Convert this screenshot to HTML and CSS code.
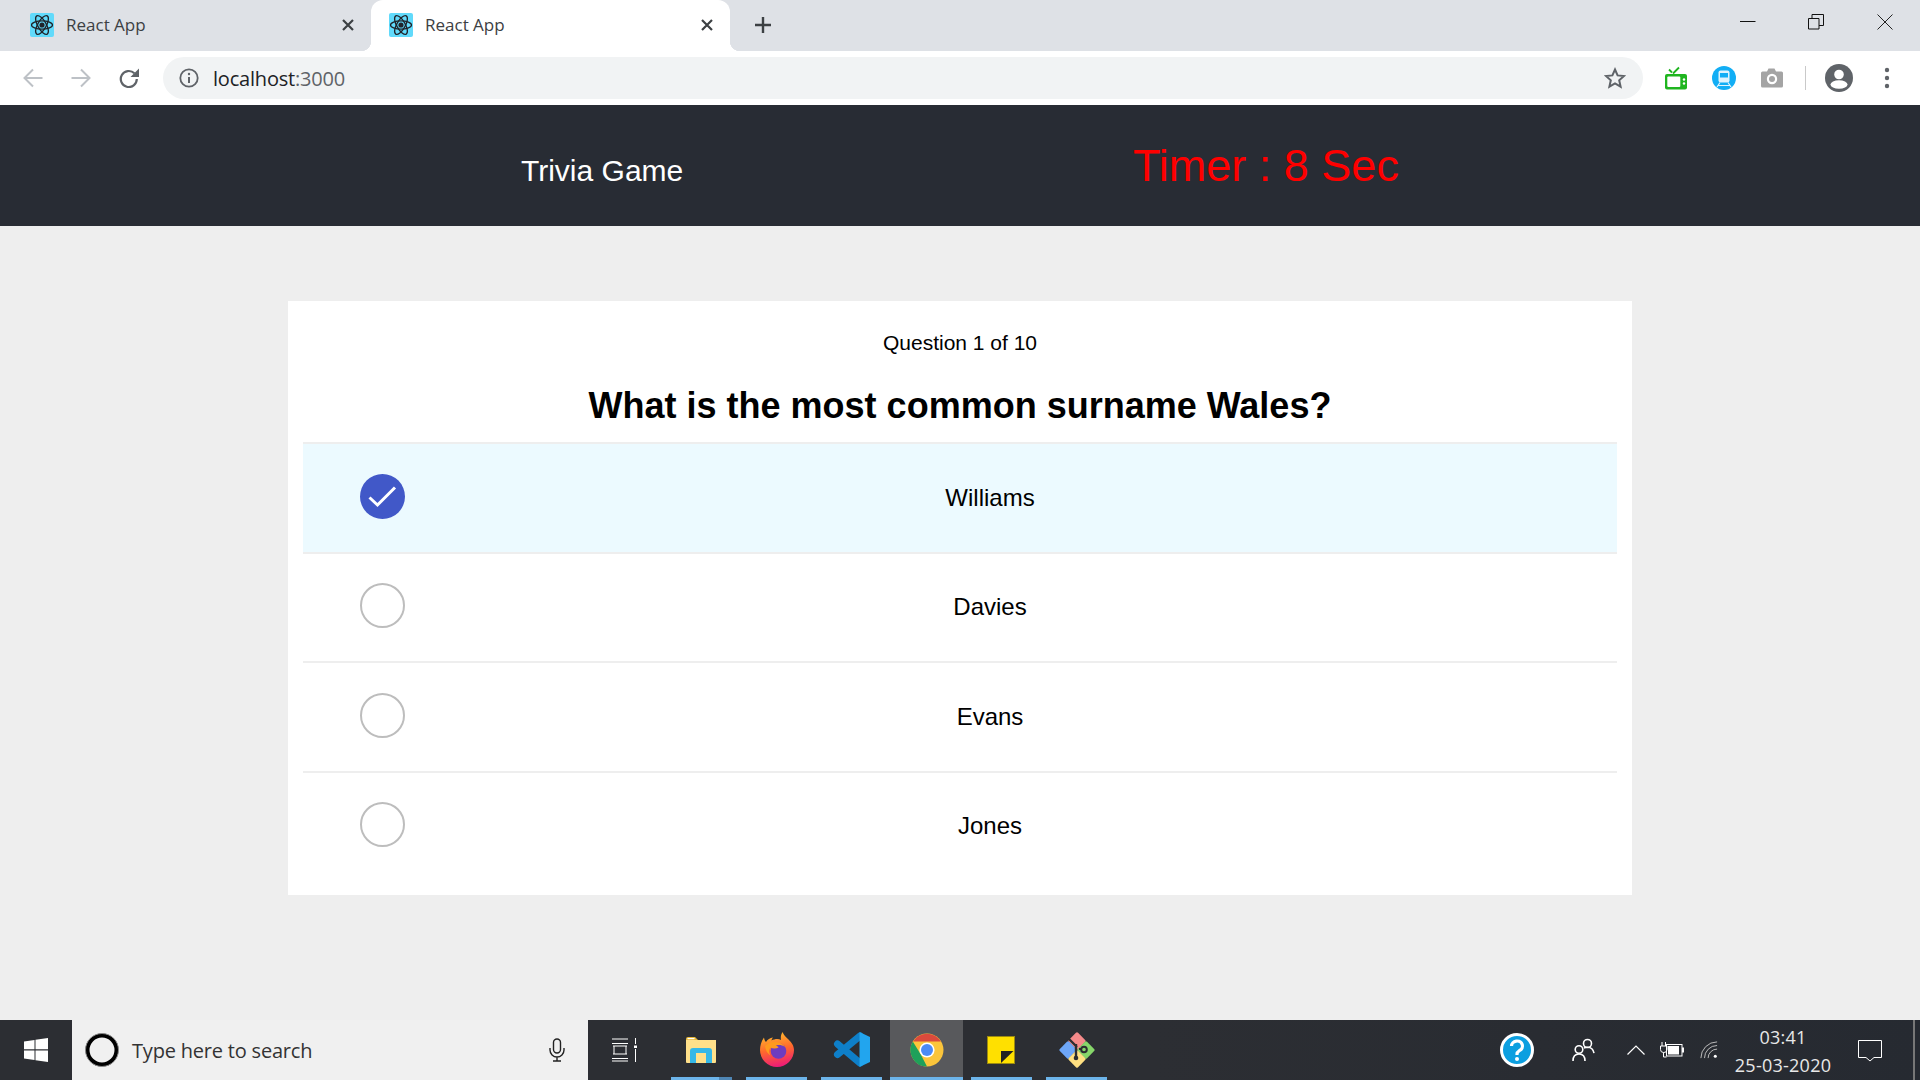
FILE: index.html
```html
<!DOCTYPE html>
<html lang="en">
<head>
<meta charset="utf-8">
<title>React App</title>
<link rel="stylesheet" href="styles.css">
</head>
<body>
<svg class="defs" width="0" height="0" aria-hidden="true">
  <symbol id="react" viewBox="0 0 24 24">
    <rect width="24" height="24" rx="2" fill="#61dafb"/>
    <g fill="none" stroke="#20232a" stroke-width="1.3">
      <ellipse cx="12" cy="12" rx="10.5" ry="4.2"/>
      <ellipse cx="12" cy="12" rx="10.5" ry="4.2" transform="rotate(60 12 12)"/>
      <ellipse cx="12" cy="12" rx="10.5" ry="4.2" transform="rotate(120 12 12)"/>
    </g>
    <circle cx="12" cy="12" r="2.6" fill="#20232a"/>
  </symbol>
  <symbol id="x" viewBox="0 0 14 14">
    <path d="M2 2l10 10M12 2L2 12" stroke="#3c4043" stroke-width="2.2" fill="none"/>
  </symbol>
</svg>

<div class="tabstrip">
  <div class="tab">
    <svg class="favicon"><use href="#react"/></svg>
    <span class="tab-title">React App</span>
    <svg class="tab-close"><use href="#x"/></svg>
  </div>
  <div class="tab tab-active">
    <svg class="favicon"><use href="#react"/></svg>
    <span class="tab-title">React App</span>
    <svg class="tab-close"><use href="#x"/></svg>
  </div>
  <svg class="newtab" viewBox="0 0 18 18"><path d="M9 1v16M1 9h16" stroke="#3c4043" stroke-width="2.4"/></svg>
  <div class="winctrls">
    <svg class="win win-min" viewBox="0 0 16 16"><path d="M0 7.5h15.5" stroke="#111" stroke-width="1"/></svg>
    <svg class="win win-max" viewBox="0 0 16 16"><path d="M.5 4.5h10.5v10.500H.5zM4 4.500V.5h11.500v11H11" fill="none" stroke="#111" stroke-width="1"/></svg>
    <svg class="win win-close" viewBox="0 0 16 16"><path d="M.5.5l15 15M15.500.5l-15 15" stroke="#222" stroke-width="1"/></svg>
  </div>
</div>

<div class="toolbar">
  <svg class="nav nav-back" viewBox="0 0 20 20"><path d="M19.500 10H2M10 1.500L1.500 10l8.500 8.500" fill="none" stroke="#bdc1c6" stroke-width="2"/></svg>
  <svg class="nav nav-fwd" viewBox="0 0 20 20"><path d="M.5 10H18M10 1.500l8.500 8.500-8.500 8.500" fill="none" stroke="#bdc1c6" stroke-width="2"/></svg>
  <svg class="nav nav-reload" viewBox="0 0 20 20"><path d="M17.800 11a8 8 0 1 1-2.400-5.700" fill="none" stroke="#5f6368" stroke-width="2.200"/><path d="M20 .5v8.500h-8.500z" fill="#5f6368"/></svg>
  <div class="omnibox">
    <svg class="info" viewBox="0 0 20 20"><circle cx="10" cy="10" r="8.700" fill="none" stroke="#5f6368" stroke-width="1.800"/><path d="M10 9v6" stroke="#5f6368" stroke-width="2"/><circle cx="10" cy="6" r="1.200" fill="#5f6368"/></svg>
    <span class="url">localhost<span class="url-port">:3000</span></span>
    <svg class="star" viewBox="0 0 22 22"><path d="M11 2.500l2.600 5.900 6.400.6-4.800 4.300 1.400 6.300-5.600-3.300-5.600 3.300 1.400-6.300L2 9l6.400-.6z" fill="none" stroke="#5f6368" stroke-width="2"/></svg>
  </div>
  <svg class="ext ext-tv" viewBox="0 0 24 24"><path d="M8 6.500L5 3.500M9 7.500l6-6" stroke="#1fb51f" stroke-width="1.800" fill="none"/><rect x="1" y="8" width="22" height="15.500" rx="2" fill="#1fb51f"/><rect x="3.300" y="10.500" width="13" height="10.500" rx="1" fill="#fff"/><circle cx="20" cy="13.500" r="1.200" fill="#fff"/><circle cx="20" cy="17.500" r="1.200" fill="#fff"/></svg>
  <svg class="ext ext-train" viewBox="0 0 24 24"><circle cx="12" cy="12" r="12" fill="#12aef5"/><rect x="6.500" y="4.500" width="11" height="12" rx="2" fill="#dff3fd"/><rect x="8" y="7" width="8" height="4.500" fill="#12aef5"/><path d="M8 16.500l-3 4.500M16 16.500l3 4.500M6 19.500h12" stroke="#dff3fd" stroke-width="1.200" fill="none"/></svg>
  <svg class="ext ext-cam" viewBox="0 0 24 24"><path d="M2.500 5.500H7L8.500 2.500h6L16 5.500h5.500a1.500 1.500 0 0 1 1.500 1.500v13a1.500 1.500 0 0 1-1.500 1.500h-19A1.500 1.500 0 0 1 1 20V7a1.500 1.500 0 0 1 1.500-1.500z" fill="#a4a4a4"/><circle cx="12" cy="13" r="5.200" fill="#fff"/><circle cx="12" cy="13" r="3" fill="#a4a4a4"/></svg>
  <div class="toolbar-sep"></div>
  <svg class="account" viewBox="0 0 28 28"><circle cx="14" cy="14" r="14" fill="#5f6368"/><circle cx="14" cy="10.500" r="4.800" fill="#fff"/><ellipse cx="14" cy="20.500" rx="8.500" ry="4.300" fill="#fff"/></svg>
  <svg class="kebab" viewBox="0 0 6 22"><circle cx="3" cy="3" r="2.200" fill="#5f6368"/><circle cx="3" cy="11" r="2.200" fill="#5f6368"/><circle cx="3" cy="19" r="2.200" fill="#5f6368"/></svg>
</div>

<header class="app-header">
  <span class="app-title">Trivia Game</span>
  <span class="app-timer">Timer : 8 Sec</span>
</header>

<main class="page">
  <section class="card">
    <p class="counter">Question 1 of 10</p>
    <h1 class="question">What is the most common surname Wales?</h1>
    <div class="answer answer-selected">
      <svg class="radio" viewBox="0 0 45 45"><circle cx="22.500" cy="22.500" r="22.500" fill="#4158c8"/><path d="M9.500 23.500l8 7.500L35 13.500" fill="none" stroke="#fff" stroke-width="3"/></svg>
      <span class="answer-text">Williams</span>
    </div>
    <div class="answer">
      <svg class="radio" viewBox="0 0 45 45"><circle cx="22.500" cy="22.500" r="21.500" fill="#fff" stroke="#bdbdbd" stroke-width="2"/></svg>
      <span class="answer-text">Davies</span>
    </div>
    <div class="answer">
      <svg class="radio" viewBox="0 0 45 45"><circle cx="22.500" cy="22.500" r="21.500" fill="#fff" stroke="#bdbdbd" stroke-width="2"/></svg>
      <span class="answer-text">Evans</span>
    </div>
    <div class="answer answer-last">
      <svg class="radio" viewBox="0 0 45 45"><circle cx="22.500" cy="22.500" r="21.500" fill="#fff" stroke="#bdbdbd" stroke-width="2"/></svg>
      <span class="answer-text">Jones</span>
    </div>
  </section>
</main>

<footer class="taskbar">
  <div class="start">
    <svg class="start-logo" viewBox="0 0 24 24"><path d="M0 3.500l10.500-1.500v9.300H0zM11.500 1.800L24 0v11.300H11.500zM0 12.500h10.500V22L0 20.500zM11.500 12.500H24V24l-12.500-1.800z" fill="#fff"/></svg>
  </div>
  <div class="search">
    <svg class="cortana" viewBox="0 0 34 34"><circle cx="17" cy="17" r="14.500" fill="none" stroke="#000" stroke-width="4"/><circle cx="17" cy="17" r="16.500" fill="none" stroke="#888" stroke-width="1"/></svg>
    <span class="search-text">Type here to search</span>
    <svg class="mic" viewBox="0 0 18 24"><rect x="5.500" y="1" width="7" height="14" rx="3.500" fill="none" stroke="#222" stroke-width="1.400"/><path d="M2 10v2a7 7 0 0 0 14 0v-2M9 19v3.500M5 23h8" fill="none" stroke="#222" stroke-width="1.400"/></svg>
  </div>
  <div class="taskview">
    <svg viewBox="0 0 26 24"><path d="M1 1h16M1 5.500h16M3 8v8M15 8v8M2 8h14M2 16h14M1 20.500h16M1 23h16M24.500 0v6M24.500 11v13" fill="none" stroke="#fff" stroke-width="1"/><rect x="23" y="7.500" width="3" height="2.500" fill="#fff"/></svg>
  </div>
  <div class="apps">
    <div class="app app-first">
      <svg class="ico-explorer" viewBox="0 0 32 28"><path d="M1 3a2 2 0 0 1 2-2h7l3 3h-12z" fill="#e8b93a"/><path d="M1 4h30v22a1 1 0 0 1-1 1H2a1 1 0 0 1-1-1z" fill="#ffe08a"/><rect x="2.500" y="2" width="7" height="1.200" fill="#fff"/><path d="M5 27V15a3 3 0 0 1 3-3h16a3 3 0 0 1 3 3v12h-6V17H11v10z" fill="#35b8e8"/></svg>
    </div>
    <div class="app">
      <svg class="ico-firefox" viewBox="0 0 34 35">
        <defs><linearGradient id="ffg" x1="0.300" y1="0" x2="0.500" y2="1"><stop offset="0" stop-color="#ffc02e"/><stop offset=".5" stop-color="#ff6a2b"/><stop offset="1" stop-color="#ee1a78"/></linearGradient></defs>
        <path d="M22.500 0c1 3 3.500 5 6 7.500 3 3 5.500 6 5.500 10.500a17 17 0 0 1-34 0C0 14 1.200 9.500 4 5.500c.3 2 1 3.500 2 4.500 1.500-2.500 4-4 7-4.500-1 1-1.500 2-1.500 3 3-1.500 7-2 9.500-.5C20.500 5 21 2.500 22.500 0z" fill="url(#ffg)"/>
        <circle cx="18.500" cy="19" r="7.800" fill="#6e3cc0"/>
        <path d="M5 14c3-3 7-4.500 11-4 4 .5 7 2 9 5-3-2-6-2.500-9-1.500 1 .5 2 1 2.500 2-3 1.500-6 1-8 0-2 2-2 5 0 8-3-2-5-5-5.500-9.500z" fill="#ff9a1f"/>
      </svg>
    </div>
    <div class="app">
      <svg class="ico-vscode" viewBox="0 0 37 37"><path d="M27 5L4.500 23.500M4.500 13L27 32" fill="none" stroke="#0e7fc9" stroke-width="7" stroke-linecap="round"/><path d="M26.500 1l10.500 5v25l-10.500 5z" fill="#22a5ee"/></svg>
    </div>
    <div class="app app-active">
      <svg class="ico-chrome" viewBox="0 0 34 34"><circle cx="17" cy="17" r="16.500" fill="#fbc53b"/><path d="M3 8.500A16.500 16.500 0 0 1 31 8.500H17z" fill="#db4a3c"/><path d="M2.800 8.500L10.500 21 17 33.500A16.500 16.500 0 0 1 2.800 8.500z" fill="#1fa05a"/><circle cx="17" cy="17" r="7.600" fill="#fff"/><circle cx="17" cy="17" r="6" fill="#4c8bf5"/></svg>
    </div>
    <div class="app">
      <svg class="ico-notes" viewBox="0 0 28 28"><rect x=".5" y=".5" width="27" height="27" fill="#ffe000" stroke="#9c8a10" stroke-width="1"/><path d="M14 15h12.500L14 27z" fill="#222"/></svg>
    </div>
    <div class="app">
      <svg class="ico-git" viewBox="0 0 36 36">
        <rect x="-6.500" y="-6.500" width="13" height="13" rx="1.500" fill="#f58a8a" transform="translate(18 9) rotate(45)"/>
        <rect x="-6.500" y="-6.500" width="13" height="13" rx="1.500" fill="#6ea6f7" transform="translate(9 18) rotate(45)"/>
        <rect x="-6.500" y="-6.500" width="13" height="13" rx="1.500" fill="#86d66a" transform="translate(27 18) rotate(45)"/>
        <rect x="-6.500" y="-6.500" width="13" height="13" rx="1.500" fill="#ffe082" transform="translate(18 27) rotate(45)"/>
        <path d="M10 7l8 8M17 12v13" fill="none" stroke="#2b2d31" stroke-width="2.400"/>
        <path d="M20 17h3" stroke="#2b2d31" stroke-width="2"/>
        <circle cx="25" cy="17.500" r="2.800" fill="none" stroke="#2b2d31" stroke-width="2"/>
        <circle cx="17" cy="26" r="2.300" fill="#2b2d31"/>
      </svg>
    </div>
  </div>
  <div class="tray">
    <svg class="tray-help" viewBox="0 0 34 34"><circle cx="17" cy="17" r="15.500" fill="#0c9fe0" stroke="#fff" stroke-width="3"/><path d="M11.500 13a5.500 5 0 1 1 8 4.500c-1.500 1-2.500 2-2.500 3.500v1" fill="none" stroke="#fff" stroke-width="3.200"/><circle cx="17" cy="26" r="2" fill="#fff"/></svg>
    <svg class="tray-people" viewBox="0 0 24 24"><circle cx="16.500" cy="5.500" r="4" fill="none" stroke="#fff" stroke-width="1.600"/><circle cx="8" cy="11.500" r="3.800" fill="none" stroke="#fff" stroke-width="1.600"/><path d="M2 23c0-4 2-7 6-7s6 3 6 7M13 10c1-.5 2-.8 3.500-.8 4 0 6 3 6.500 6" fill="none" stroke="#fff" stroke-width="1.600"/></svg>
    <svg class="tray-chevron" viewBox="0 0 18 10"><path d="M.5 9.500L9 1l8.500 8.500" fill="none" stroke="#fff" stroke-width="1.200"/></svg>
    <svg class="tray-battery" viewBox="0 0 24 16"><path d="M2 0v4M5.500 0v4M.5 4h6.500v3.500a3 3 0 0 1-3 3h-.5a3 3 0 0 1-3-3zM3.500 10.500v4.500h3" fill="none" stroke="#fff" stroke-width="1"/><rect x="6.500" y="2.500" width="15.500" height="11.500" fill="none" stroke="#fff" stroke-width="1"/><rect x="8" y="4" width="11" height="8.500" fill="#fff"/><rect x="22" y="5.500" width="2" height="5" fill="#fff"/></svg>
    <svg class="tray-wifi" viewBox="0 0 20 20"><path d="M1 19A18 18 0 0 1 19 1M5 19A14 14 0 0 1 19 5M9 19A10 10 0 0 1 19 9" fill="none" stroke="#bbb" stroke-width="1.100"/><circle cx="17" cy="17" r="1.700" fill="#fff"/></svg>
    <div class="clock">
      <span class="clock-time">03:41</span>
      <span class="clock-date">25-03-2020</span>
    </div>
    <svg class="tray-notify" viewBox="0 0 24 24"><path d="M.5 2.500h23v17H16l-4 3.500-4-3.500H.5z" fill="none" stroke="#fff" stroke-width="1"/></svg>
    <div class="show-desktop"></div>
  </div>
</footer>
</body>
</html>
```
FILE: styles.css
```css
* { box-sizing: border-box; }
html, body { margin: 0; height: 100%; }
body {
  display: flex;
  flex-direction: column;
  height: 1080px;
  overflow: hidden;
  font-family: "Liberation Sans", Arial, sans-serif;
  background: #eee;
}
svg { display: block; flex: none; }
.defs { position: absolute; }

/* Browser tab strip */
.tabstrip {
  display: flex;
  align-items: center;
  height: 51px;
  padding-left: 12px;
  background: #dee1e6;
  flex: none;
}
.tab {
  position: relative;
  display: flex;
  align-items: center;
  width: 359px;
  height: 51px;
  padding: 0 0 1px 18px;
  border-radius: 12px 12px 0 0;
}
.tab-active { background: #fff; }
.tab-active::before,
.tab-active::after {
  content: "";
  position: absolute;
  bottom: 0;
  width: 10px;
  height: 10px;
}
.tab-active::before { left: -10px; background: radial-gradient(circle at 0 0, transparent 10px, #fff 10.500px); }
.tab-active::after { right: -10px; background: radial-gradient(circle at 100% 0, transparent 10px, #fff 10.500px); }
.favicon { width: 24px; height: 24px; }
.tab-title {
  margin: 0 0 2px 12px;
  width: 270px;
  font: 17px "Open Sans", sans-serif;
  color: #3c4043;
}
.tab-close { width: 14px; height: 14px; margin-left: 5px; }
.newtab { width: 18px; height: 18px; margin: 0 0 1px 24px; }
.winctrls {
  display: flex;
  align-items: center;
  margin-left: auto;
  padding-right: 27px;
  height: 44px;
  align-self: flex-start;
}
.win { width: 16px; height: 16px; }
.win-max { margin-left: 52px; }
.win-close { margin-left: 53px; }

/* Browser toolbar */
.toolbar {
  display: flex;
  align-items: center;
  height: 54px;
  background: #fff;
  flex: none;
}
.nav { width: 20px; height: 20px; }
.nav-back { margin-left: 23px; }
.nav-fwd { margin-left: 28px; }
.nav-reload { margin-left: 28px; margin-top: -1px; }
.omnibox {
  display: flex;
  align-items: center;
  width: 1480px;
  height: 42px;
  margin-left: 24px;
  padding: 0 12px 0 16px;
  border-radius: 21px;
  background: #f1f3f4;
}
.info { width: 20px; height: 20px; }
.url {
  margin-left: 14px;
  font: 20px "Open Sans", sans-serif;
  letter-spacing: -.2px;
  color: #202124;
}
.url-port { color: #5f6368; }
.star { width: 22px; height: 22px; margin-left: auto; margin-right: 5px; }
.ext { width: 24px; height: 24px; }
.ext-tv { margin-left: 21px; }
.ext-train { margin-left: 24px; }
.ext-cam { margin-left: 24px; }
.toolbar-sep { width: 1px; height: 24px; margin-left: 21px; background: #c9c9c9; }
.account { width: 28px; height: 28px; margin-left: 19px; }
.kebab { width: 6px; height: 22px; margin-left: 31px; }

/* App header */
.app-header {
  display: flex;
  align-items: center;
  height: 121px;
  padding-left: 521px;
  background: #282c34;
  flex: none;
}
.app-title { font-size: 30px; color: #fff; padding-top: 10px; width: 612px; }
.app-timer { font-size: 45px; color: #f00; }

/* Quiz */
.page { flex: 1; padding-top: 75px; }
.card {
  width: 1344px;
  height: 594px;
  margin: 0 auto;
  padding: 0 15px;
  background: #fff;
}
.counter {
  margin: 0;
  padding-top: 30px;
  font-size: 21px;
  line-height: 24px;
  text-align: center;
  color: #000;
}
.question {
  margin: 0;
  padding-top: 30px;
  height: 87px;
  font-size: 36px;
  line-height: 42px;
  font-weight: 700;
  text-align: center;
  color: #000;
}
.answer {
  display: flex;
  align-items: center;
  height: 109.500px;
  padding-left: 57px;
  border-top: 2px solid #eee;
}
.answer-selected { background: #ecfaff; }
.radio { width: 45px; height: 45px; margin-top: -3px; }
.answer-text {
  flex: 1;
  padding-right: 42px;
  font-size: 24px;
  text-align: center;
  color: #000;
}

/* Windows taskbar */
.taskbar {
  display: flex;
  align-items: stretch;
  height: 60px;
  background: linear-gradient(90deg, #2c2e33 0, #2c2e33 60%, #262a31 100%);
  flex: none;
}
.start { display: flex; align-items: center; width: 72px; padding-left: 24px; }
.start-logo { width: 24px; height: 24px; }
.search {
  display: flex;
  align-items: center;
  width: 516px;
  padding-left: 13px;
  background: #f0f0f0;
}
.cortana { width: 34px; height: 34px; }
.search-text {
  margin-left: 13px;
  font: 20px "Open Sans", sans-serif;
  letter-spacing: -.2px;
  color: #333;
}
.mic { width: 18px; height: 24px; margin-left: auto; margin-right: 22px; }
.taskview { display: flex; align-items: center; width: 59px; padding-left: 23px; }
.taskview svg { width: 26px; height: 24px; }
.apps { display: flex; margin-left: 24px; }
.app {
  display: flex;
  align-items: center;
  justify-content: center;
  width: 61px;
  margin-right: 14px;
  padding-top: 2px;
  border-bottom: 3px solid #6cb4ea;
}
.app-first { border-image: linear-gradient(90deg, #6cb4ea 77%, #4f86b5 77%) 1; }
.ico-explorer { width: 32px; height: 28px; margin-right: 2px; }
.ico-firefox { width: 34px; height: 35px; }
.ico-vscode { width: 37px; height: 37px; }
.ico-chrome { width: 34px; height: 34px; }
.ico-notes { width: 28px; height: 28px; margin-right: 2px; }
.ico-git { width: 36px; height: 36px; }
.app-active {
  width: 73px;
  margin: 0 8px 0 -6px;
  background: #58595c;
}
.tray { display: flex; align-items: center; margin-left: auto; color: #fff; }
.tray-help { width: 34px; height: 34px; }
.tray-people { width: 24px; height: 24px; margin-left: 37px; }
.tray-chevron { width: 18px; height: 10px; margin-left: 32px; }
.tray-battery { width: 24px; height: 16px; margin-left: 15px; }
.tray-wifi { width: 18px; height: 18px; margin-left: 16px; }
.clock {
  display: flex;
  flex-direction: column;
  align-items: center;
  width: 96px;
  margin-left: 17px;
  padding-top: 1px;
  font: 18px "Open Sans", sans-serif;
  letter-spacing: .25px;
  line-height: 28px;
  color: #e8e8e8;
  white-space: nowrap;
}
.tray-notify { width: 24px; height: 24px; margin-left: 27px; }
.show-desktop { width: 2px; height: 60px; margin-left: 31px; margin-right: 5px; background: #777; }
```
